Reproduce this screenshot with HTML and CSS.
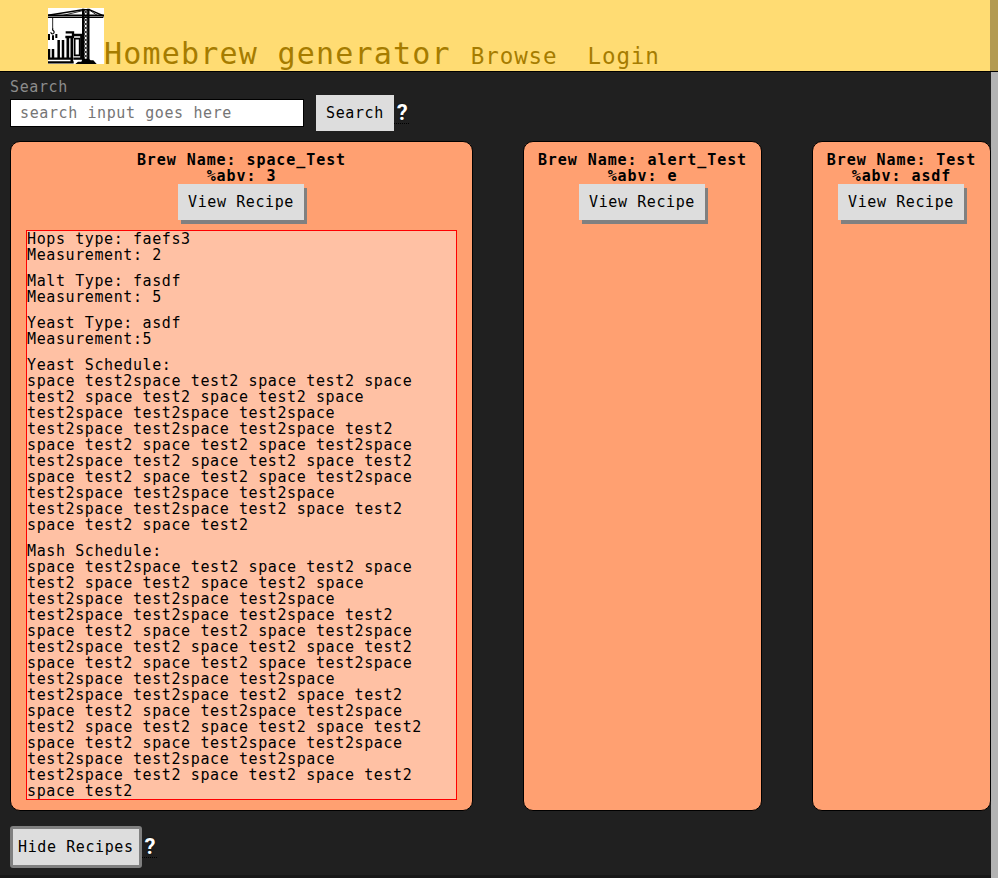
FILE: index.html
```html
<!DOCTYPE html>
<html lang="en">
<head>
<meta charset="utf-8">
<title>Homebrew generator</title>
<link rel="stylesheet" href="styles.css">
</head>
<body>
<div class="page">
<header class="topbar">
  <svg class="logo" viewBox="6 6 168 168" aria-hidden="true">
    <rect x="6" y="6" width="168" height="168" fill="#fff"/>
    <g fill="none" stroke="#000">
      <path d="M6 28 L110 11 H130 L174 30" stroke-width="4.5"/>
      <path d="M52 28 L110 14 M130 12 L155 29" stroke-width="2.5"/>
      <path d="M6 28 H174 M6 34 H172" stroke-width="4.5"/>
      <path d="M20 35 V68" stroke-width="2.5"/>
      <path d="M20 67 V72 Q27 77 23 82 Q18 87 14 79" stroke-width="3.5"/>
      <path d="M111.500 8 V166 M127 8 V166" stroke-width="7"/>
      <path d="M113 12 L125 24 L113 36 L125 48 L113 60 L125 72 L113 84 L125 96 L113 108 L125 120 L113 132 L125 144 L113 156 L125 168 M125 12 L113 24 L125 36 L113 48 L125 60 L113 72 L125 84 L113 96 L125 108 L113 120 L125 132 L113 144 L125 156 L113 168" stroke-width="3"/>
      <path d="M59 79 H81 V92 M58 93 H84" stroke-width="7"/>
      <path d="M80 87 H106 V158 H84" stroke-width="7"/>
      <path d="M86 98 H101 V148 H86 Z" stroke-width="5"/>
      <path d="M9 84 V102 M21 88 V102 M31 84 V96" stroke-width="6"/>
      <path d="M9 129 V158 M21 129 V158 M38 102 V158 M51 102 V158" stroke-width="7.500"/>
      <path d="M65.500 94 V158 M77.500 94 V170" stroke-width="8"/>
      <path d="M6 158 H83 M6 169 H83" stroke-width="7"/>
    </g>
    <path d="M88 174 L96 167 H106 L110 158 H128 L134 163 H142 L152 174 Z" fill="#000"/>
  </svg>
  <h1 class="brand">Homebrew generator</h1>
  <nav class="links"><a>Browse</a><a>Login</a></nav>
</header>
<main class="content">
  <label class="label" for="q">Search</label>
  <div class="search">
    <input id="q" class="field" placeholder="search input goes here">
    <button class="btn">Search</button>
    <span class="hint">?</span>
  </div>
  <section class="cards">
    <article class="card card-open">
      <h2 class="name">Brew Name: space_Test<br>%abv: 3</h2>
      <button class="btn raised">View Recipe</button>
      <div class="recipe">
<p>Hops type: faefs3
Measurement: 2</p>
<p>Malt Type: fasdf
Measurement: 5</p>
<p>Yeast Type: asdf
Measurement:5</p>
<p>Yeast Schedule:
space test2space test2 space test2 space
test2 space test2 space test2 space
test2space test2space test2space
test2space test2space test2space test2
space test2 space test2 space test2space
test2space test2 space test2 space test2
space test2 space test2 space test2space
test2space test2space test2space
test2space test2space test2 space test2
space test2 space test2</p>
<p>Mash Schedule:
space test2space test2 space test2 space
test2 space test2 space test2 space
test2space test2space test2space
test2space test2space test2space test2
space test2 space test2 space test2space
test2space test2 space test2 space test2
space test2 space test2 space test2space
test2space test2space test2space
test2space test2space test2 space test2
space test2 space test2space test2space
test2 space test2 space test2 space test2
space test2 space test2space test2space
test2space test2space test2space
test2space test2 space test2 space test2
space test2</p>
      </div>
    </article>
    <article class="card card-mid">
      <h2 class="name">Brew Name: alert_Test<br>%abv: e</h2>
      <button class="btn raised">View Recipe</button>
    </article>
    <article class="card card-small">
      <h2 class="name">Brew Name: Test<br>%abv: asdf</h2>
      <button class="btn raised">View Recipe</button>
    </article>
  </section>
  <div class="actions">
    <button class="btn outlined">Hide Recipes</button>
    <span class="hint">?</span>
  </div>
</main>
<footer class="footer"></footer>
</div>
<div class="scroll"><div class="scroll-top"></div><div class="scroll-rest"></div></div>
</body>
</html>
```
FILE: styles.css
```css
* { box-sizing: border-box; }
body {
  margin: 0;
  height: 878px;
  overflow: hidden;
  background: #202020;
  font: 15px/16px "DejaVu Sans Mono", monospace;
  letter-spacing: 0.602px;
  color: #000;
}
.page { height: 878px; display: flex; flex-direction: column; }
.topbar {
  flex: none;
  height: 72px;
  padding: 8px 0 0 48px;
  display: flex;
  align-items: flex-start;
  background: #ffdc73;
  border-bottom: 1px solid #000;
  color: #a67c00;
}
.logo { width: 56px; height: 56px; flex: none; }
.brand { margin: 30px 0 0; font-size: 30px; line-height: 32px; font-weight: 400; letter-spacing: 1.204px; }
.links { display: flex; gap: 30px; margin: 36px 0 0 20px; font-size: 22.500px; line-height: 24px; letter-spacing: 0.903px; }
.content { flex: 1; padding: 7px 0 0 10px; }
.label { display: block; height: 16px; color: #8c8c8c; }
.search { display: flex; align-items: center; height: 36px; }
.field {
  width: 294px;
  height: 28px;
  margin: 0 12px 0 0;
  padding: 0 10px 1px 9px;
  border: 1px solid #000;
  border-radius: 0;
  background: #fff;
  font: inherit;
  letter-spacing: inherit;
}
.field::placeholder { color: #757575; }
.btn {
  height: 36px;
  padding: 0 10px;
  border: 0;
  border-radius: 0;
  background: #ddd;
  color: #000;
  font: inherit;
  letter-spacing: inherit;
  white-space: nowrap;
}
.raised { margin-right: 1px; box-shadow: 3px 4px 0 #808080; }
.outlined { height: 42px; padding: 0 5px; border: 3px solid #808080; border-radius: 3px; }
.hint {
  width: 15px;
  height: 21px;
  padding-left: 3px;
  border-bottom: 1px dotted #000;
  color: #fff;
  font: 700 22px/20px Roboto, sans-serif;
  letter-spacing: 0;
  text-shadow: 0 0 2px #000;
}
.cards { display: flex; gap: 50px; height: 670px; margin-top: 10px; }
.card {
  flex: none;
  display: flex;
  flex-direction: column;
  align-items: center;
  padding: 10px 15px;
  border: 1px solid #000;
  border-radius: 10px;
  background: #ffa071;
}
.card-open { width: 463px; }
.card-mid { width: 239px; padding: 10px 0; }
.card-small { width: 179px; padding: 10px 0; }
.name { margin: 0; font-size: 15px; line-height: 16px; letter-spacing: 0.930px; text-align: center; white-space: nowrap; }
.recipe {
  align-self: stretch;
  height: 570px;
  margin-top: 10px;
  border: 1px solid #f00;
  background: #ffc1a4;
  white-space: pre-line;
  display: flex;
  flex-direction: column;
  gap: 10px;
}
.recipe p { margin: 0; }
.actions { display: flex; align-items: center; margin-top: 15px; }
.footer { flex: none; height: 3px; background: #181818; }
.scroll { position: fixed; top: 0; right: 0; width: 8px; height: 878px; display: flex; flex-direction: column; align-items: flex-end; }
.scroll-top { width: 8px; height: 71px; background: #b39a50; }
.scroll-rest { width: 7px; flex: 1; margin-top: 1px; background: #b3b3b3; }
```
